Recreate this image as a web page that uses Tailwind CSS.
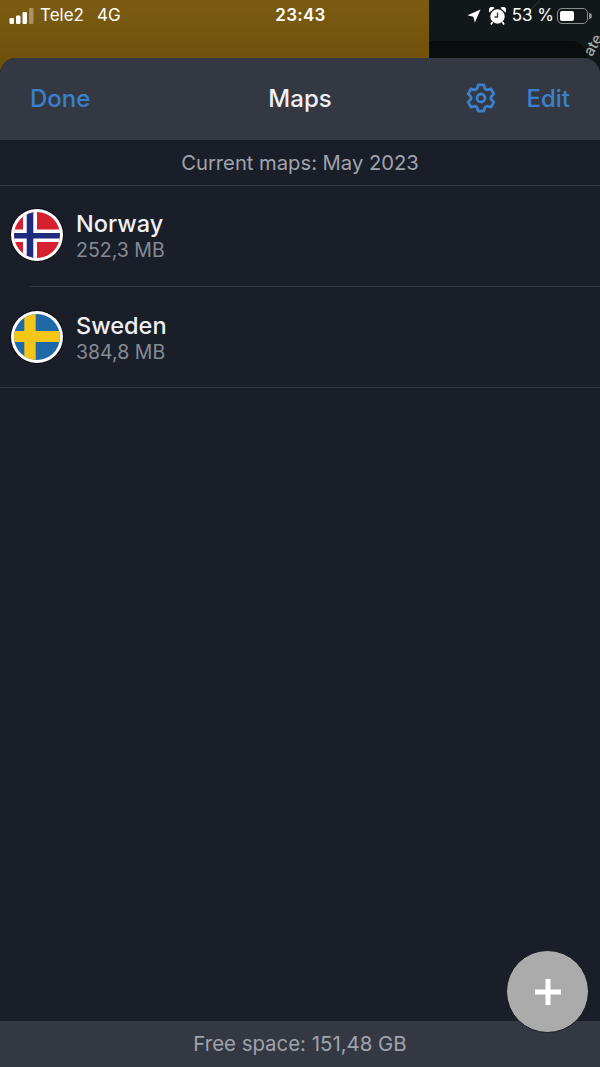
<!DOCTYPE html>
<html lang="en">
<head>
    <meta charset="UTF-8">
    <meta name="viewport" content="width=device-width, initial-scale=1.0">
    <title>Maps</title>
    <script src="https://cdn.jsdelivr.net/npm/@tailwindcss/browser@4"></script>
</head>
<body class="bg-[#191e29] font-['Inter','Liberation_Sans',sans-serif]">
<div class="relative w-[600px] h-[1067px] overflow-hidden flex flex-col">
    <!-- Map behind the sheet -->
    <div class="absolute top-0 left-0 w-[600px] h-[70px] flex">
        <div class="w-[429px] bg-gradient-to-b from-[#7c5c12] to-[#6e5009]"></div>
        <div class="relative flex-1 bg-[#12181a] overflow-hidden">
            <div class="absolute left-0 top-[41px] w-[158px] h-[40px] rounded-tr-[16px] bg-[#090d0e]"></div>
            <div class="absolute left-[100px] -top-[4px] w-[1px] h-[30px] bg-[#2b3436] rotate-45"></div>
            <span class="absolute left-[153px] top-[34px] text-[15px] font-medium text-[#a6a8a8] -rotate-60">ate</span>
        </div>
    </div>

    <!-- Status bar -->
    <div class="relative h-[58px] shrink-0 text-white text-[17px]">
        <div class="h-[31px] flex items-center justify-between pl-[9px] pr-[8px]">
            <div class="flex items-center w-[200px]">
                <svg width="26" height="16" viewBox="0 0 26 16" fill="#fff">
                    <rect x="0.5" y="10" width="4.5" height="6" rx="1.2"/>
                    <rect x="7" y="7.5" width="4.5" height="8.5" rx="1.2"/>
                    <rect x="13.5" y="4" width="4.5" height="12" rx="1.2"/>
                    <rect x="20" y="0" width="4.5" height="16" rx="1.2" fill-opacity="0.35"/>
                </svg>
                <span class="ml-[5px]">Tele2</span>
                <span class="ml-[13px]">4G</span>
            </div>
            <span class="font-semibold tracking-[0.3px]">23:43</span>
            <div class="flex items-center justify-end w-[200px]">
                <svg width="14" height="14" viewBox="0 0 15 15" fill="#fff"><path d="M14.5 0.5 L8.4 14.5 L6.8 8.2 L0.5 6.6 Z"/></svg>
                <svg class="ml-[8px]" width="17" height="18" viewBox="0 0 17 18">
                    <circle cx="8.5" cy="9.5" r="7.200" fill="#fff"/>
                    <path d="M8.500 5.500 V10 H5.500" stroke="#333" stroke-width="1.300" fill="none"/>
                    <path d="M0.500 5.500 A3.300 3.300 0 0 1 5.500 1 Z M16.500 5.500 A3.300 3.300 0 0 0 11.500 1 Z" fill="#fff"/>
                    <path d="M3.500 15 L2 17.500 M13.500 15 L15 17.500" stroke="#fff" stroke-width="1.700"/>
                </svg>
                <span class="ml-[6px]">53 %</span>
                <div class="ml-[3px] w-[31px] h-[16px] rounded-[5px] border-[1.5px] border-[#8b8d8d] p-[2px] flex">
                    <div class="w-[14px] bg-white rounded-[2px]"></div>
                </div>
                <div class="w-[3px] h-[6px] bg-[#8b8d8d] rounded-r-sm ml-[1px]"></div>
            </div>
        </div>
    </div>

    <!-- Sheet -->
    <div class="relative flex-1 flex flex-col rounded-t-[16px] overflow-hidden bg-[#191e29]">
        <header class="h-[82px] shrink-0 bg-[#343843] flex items-center justify-between pl-[30px] pr-[30px]">
            <span class="w-[140px] text-[24px] font-medium text-[#3a80cc]">Done</span>
            <h1 class="text-[24px] font-medium text-[#eef0f5]">Maps</h1>
            <div class="w-[140px] flex items-center justify-end">
                <svg class="mb-[2px]" width="30" height="30" viewBox="0 0 30 30" fill="none" stroke="#3a80cc" stroke-width="2.800" stroke-linejoin="round">
                    <path d="M10.93 5.86 L12.19 1.8 L17.81 1.8 L19.07 5.86 L20.88 6.91 L25.03 5.97 L27.84 10.83 L24.95 13.95 L24.95 16.05 L27.84 19.17 L25.03 24.03 L20.88 23.09 L19.07 24.14 L17.81 28.2 L12.19 28.2 L10.93 24.14 L9.12 23.09 L4.97 24.03 L2.16 19.17 L5.05 16.05 L5.05 13.95 L2.16 10.83 L4.97 5.97 L9.12 6.91 Z"/>
                    <circle cx="15" cy="15" r="4"/>
                </svg>
                <span class="ml-[30px] text-[24px] font-medium text-[#3a80cc]">Edit</span>
            </div>
        </header>

        <div class="h-[46px] shrink-0 pt-[1px] flex items-center justify-center border-b border-[#32363f] text-[20.2px] text-[#a0a3ab]">
            Current maps: May 2023
        </div>

        <ul>
            <li class="relative h-[101px] flex items-center pl-[10px]">
                <svg class="mb-[3px]" width="54" height="54" viewBox="0 0 54 54">
                    <defs><clipPath id="no"><circle cx="27" cy="27" r="23"/></clipPath></defs>
                    <circle cx="27" cy="27" r="27" fill="#0b0d12"/>
                    <circle cx="27" cy="27" r="26" fill="#fff"/>
                    <g clip-path="url(#no)">
                        <rect width="54" height="54" fill="#d5202f"/>
                        <rect x="13" width="14" height="54" fill="#fff"/>
                        <rect y="21.500" width="54" height="12.500" fill="#fff"/>
                        <rect x="16.700" width="6.600" height="54" fill="#1f2a7c"/>
                        <rect y="25" width="54" height="5.500" fill="#1f2a7c"/>
                    </g>
                </svg>
                <div class="ml-[12px] mb-[1px]">
                    <p class="text-[23.5px] leading-[28px] font-medium text-[#eef0f5]">Norway</p>
                    <p class="text-[19.5px] leading-[24px] text-[#878b95]">252,3 MB</p>
                </div>
                <div class="absolute left-[29px] right-0 bottom-0 border-b border-[#32363f]"></div>
            </li>
            <li class="h-[101px] flex items-center pl-[10px] border-b border-[#32363f]">
                <svg width="54" height="54" viewBox="0 0 54 54">
                    <defs><clipPath id="se"><circle cx="27" cy="27" r="23"/></clipPath></defs>
                    <circle cx="27" cy="27" r="27" fill="#0b0d12"/>
                    <circle cx="27" cy="27" r="26" fill="#fff"/>
                    <g clip-path="url(#se)">
                        <rect width="54" height="54" fill="#2069a8"/>
                        <rect x="14.300" width="11.400" height="54" fill="#f5c518"/>
                        <rect y="21" width="54" height="11" fill="#f5c518"/>
                    </g>
                </svg>
                <div class="ml-[12px] mt-[1px]">
                    <p class="text-[23.5px] leading-[28px] font-medium text-[#eef0f5]">Sweden</p>
                    <p class="text-[19.5px] leading-[24px] text-[#878b95]">384,8 MB</p>
                </div>
            </li>
        </ul>

        <div class="flex-1"></div>

        <footer class="h-[46px] shrink-0 bg-[#343843] flex items-center justify-center text-[20.4px] text-[#a0a3ab]">
            Free space: 151,48 GB
        </footer>

        <!-- Add button -->
        <button class="absolute right-[11px] bottom-[34px] w-[83px] h-[83px] rounded-full bg-[#ababab] border border-[#14171f] flex items-center justify-center">
            <svg width="26" height="26" viewBox="0 0 26 26" fill="#fff"><rect x="10.500" width="5" height="26"/><rect y="10.500" width="26" height="5"/></svg>
        </button>
    </div>
</div>
</body>
</html>
